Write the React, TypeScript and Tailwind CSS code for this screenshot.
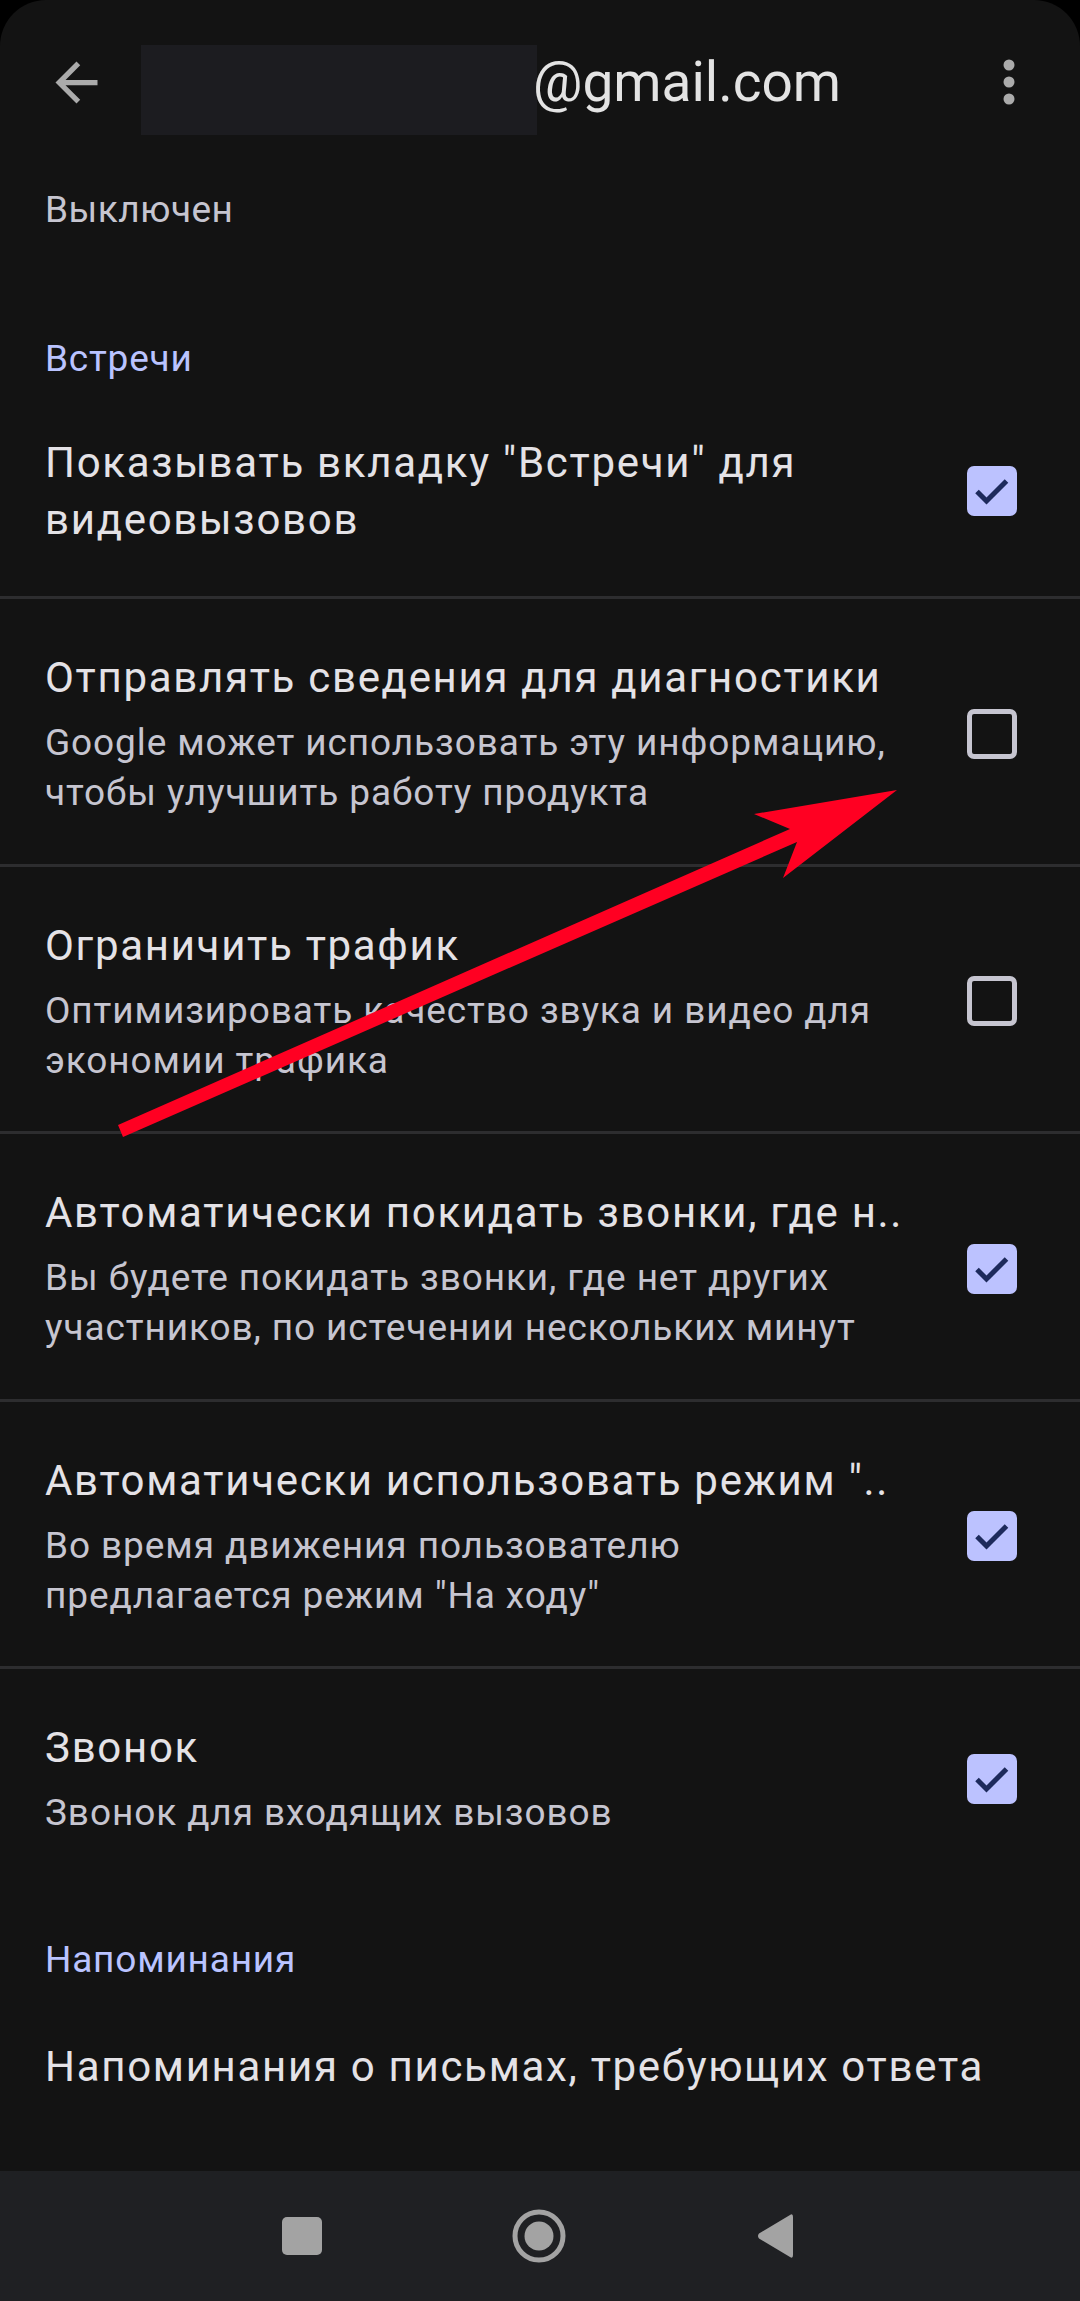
import React from 'react';

interface SettingRowProps {
  title: React.ReactNode;
  subtitle?: React.ReactNode;
  checked: boolean;
  padding?: string;
}

const Checkbox: React.FC<{ checked: boolean }> = ({ checked }) => {
  if (!checked) {
    return <div className="w-[50px] h-[50px] shrink-0 rounded-[7px] border-[5px] border-[#c6c5d0]" />;
  }
  return (
    <div className="w-[50px] h-[50px] shrink-0 rounded-[7px] bg-[#bcc2ff]">
      <svg width="50" height="50" viewBox="0 0 50 50">
        <polyline points="10,25.5 19.5,35 39.5,15" fill="none" stroke="#1d2a5c" strokeWidth="5" />
      </svg>
    </div>
  );
};

const SettingRow: React.FC<SettingRowProps> = ({
  title,
  subtitle,
  checked,
  padding = 'pt-[50px] pb-[45.5px]',
}) => {
  return (
    <div className={`flex items-center pl-[45px] pr-[63px] ${padding}`}>
      <div className="flex-1 min-w-0">
        <div className="text-[42px] leading-[57px] tracking-[1.7px] text-[#e4e2e6] whitespace-nowrap">{title}</div>
        {subtitle && (
          <div className="mt-[12px] text-[37px] leading-[50px] tracking-[0.9px] text-[#c6c5d0] whitespace-nowrap">
            {subtitle}
          </div>
        )}
      </div>
      <Checkbox checked={checked} />
    </div>
  );
};

const Divider = () => <div className="h-[3px] bg-[#2d2d2f]" />;

export default function App() {
  return (
    <div className="relative w-[1080px] h-[2301px] bg-black flex flex-col overflow-hidden font-['Roboto','Noto_Sans',sans-serif]">
      <div className="flex-1 bg-[#131313] rounded-t-[46px] overflow-hidden">
        {/* App bar */}
        <div className="h-[164px] flex items-center">
          <div className="ml-[45px] w-[63px] h-[63px] shrink-0">
            <svg width="63" height="63" viewBox="0 0 24 24">
              <path d="M20 11H7.83l5.59-5.59L12 4l-8 8 8 8 1.41-1.41L7.83 13H20v-2z" fill="#ababab" />
            </svg>
          </div>
          <div className="ml-[33px] w-[396px] h-[90px] mt-[16px] shrink-0 bg-[#1c1c20]" />
          <span className="-ml-[4px] text-[55px] text-[#e3e3e3] whitespace-nowrap">@gmail.com</span>
          <div className="ml-auto mr-[61px]">
            <svg width="20" height="50" viewBox="0 0 20 50">
              <circle cx="10" cy="8" r="5.5" fill="#ababab" />
              <circle cx="10" cy="25" r="5.5" fill="#ababab" />
              <circle cx="10" cy="42" r="5.5" fill="#ababab" />
            </svg>
          </div>
        </div>

        <div className="pt-[21px] pl-[45px] text-[37px] leading-[50px] tracking-[0.5px] text-[#c6c5d0]">Выключен</div>

        {/* Встречи */}
        <div className="pt-[99px] pl-[45px] text-[37px] leading-[50px] tracking-[0.8px] text-[#bac3ff]">Встречи</div>

        <SettingRow
          title={<>Показывать вкладку "Встречи" для<br />видеовызовов</>}
          checked
          padding="pt-[50px] pb-[48px]"
        />
        <Divider />
        <SettingRow
          title="Отправлять сведения для диагностики"
          subtitle={<>Google может использовать эту информацию,<br />чтобы улучшить работу продукта</>}
          checked={false}
        />
        <Divider />
        <SettingRow
          title="Ограничить трафик"
          subtitle={<>Оптимизировать качество звука и видео для<br />экономии трафика</>}
          checked={false}
        />
        <Divider />
        <SettingRow
          title="Автоматически покидать звонки, где н.."
          subtitle={<>Вы будете покидать звонки, где нет других<br />участников, по истечении нескольких минут</>}
          checked
        />
        <Divider />
        <SettingRow
          title={'Автоматически использовать режим "..'}
          subtitle={<>Во время движения пользователю<br />предлагается режим "На ходу"</>}
          checked
        />
        <Divider />
        <SettingRow
          title="Звонок"
          subtitle="Звонок для входящих вызовов"
          checked
          padding="pt-[50px] pb-[45px]"
        />

        {/* Напоминания */}
        <div className="pt-[52px] pl-[45px] text-[37px] leading-[50px] tracking-[0.8px] text-[#bac3ff]">Напоминания</div>
        <div className="pt-[53px] pl-[45px] text-[42px] leading-[57px] tracking-[1.7px] text-[#e4e2e6] whitespace-nowrap">
          Напоминания о письмах, требующих ответа
        </div>
      </div>

      {/* System navigation */}
      <div className="h-[130px] bg-[#1f2023] flex items-center pl-[282px] gap-[190px]">
        <div className="w-[40px] h-[38px] rounded-[5px] bg-[#a3a3a3]" />
        <svg width="54" height="54" viewBox="0 0 54 54">
          <circle cx="27" cy="27" r="24" fill="none" stroke="#a3a3a3" strokeWidth="5" />
          <circle cx="27" cy="27" r="14.5" fill="#a3a3a3" />
        </svg>
        <svg width="38" height="46" viewBox="0 0 38 46">
          <path
            d="M34 2 Q37 0 37 4 L37 42 Q37 46 34 44 L3 25.5 Q1 23 3 20.5 Z"
            fill="#a3a3a3"
          />
        </svg>
      </div>

      {/* Red annotation arrow */}
      <svg
        className="absolute inset-0 pointer-events-none"
        width="1080"
        height="2301"
        viewBox="0 0 1080 2301"
      >
        <polygon
          points="118,1125 790,829 754,814 897,790 783,878 797,842 123,1137"
          fill="#ff0022"
        />
      </svg>
    </div>
  );
}
